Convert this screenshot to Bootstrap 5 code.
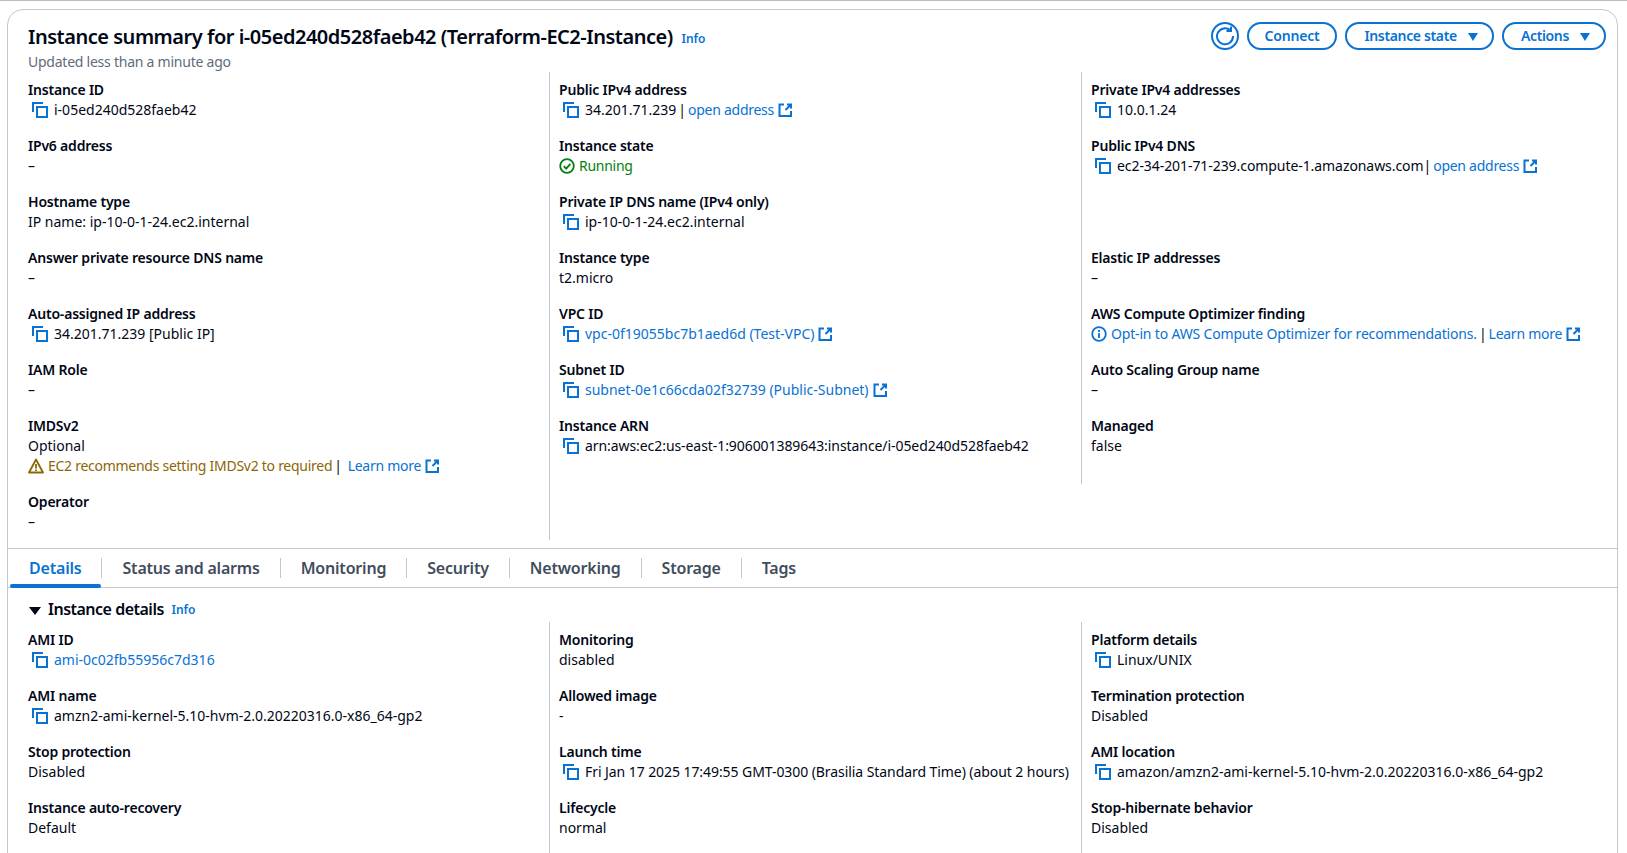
<!DOCTYPE html>
<html lang="en">

<head>
    <meta charset="UTF-8" />
    <meta name="viewport" content="width=device-width, initial-scale=1.0" />
    <title>Instance summary</title>
    <link href="https://cdn.jsdelivr.net/npm/bootstrap@5.3.0/dist/css/bootstrap.min.css" rel="stylesheet">
    <style>
        html, body { height: 853px; overflow: hidden; }
        body { background: #fff; color: #000716; font-family: "Noto Sans", sans-serif; font-size: 14px; line-height: 20px; border-top: 1px solid #b6bec9; }
        a { color: #0972d3; text-decoration: none; }
        .panel-box { margin: 8px 9px 0 7px; height: 900px; border: 1px solid #c6c6cd; border-radius: 16px 16px 0 0; }
        .summary-head { padding: 14px 11px 0 20px; height: 62px; }
        .summary-title { font-size: 20px; line-height: 26px; font-weight: 600; margin: 0; letter-spacing: -.48px; }
        .info-link { font-size: 12px; font-weight: 600; margin-left: 4px; letter-spacing: 0; vertical-align: 1px; }
        .updated { color: #5f6b7a; letter-spacing: -.24px; }
        .pill { border: 2px solid #0972d3; border-radius: 20px; color: #0972d3; font-weight: 600; font-size: 14px; line-height: 20px; height: 28px; padding: 2px 16px; background: #fff; white-space: nowrap; letter-spacing: -.2px; }
        .pill-caret { padding-left: 17px; padding-right: 14px; letter-spacing: -.35px; }
        .pill-icon { width: 28px; padding: 0; display: flex; align-items: center; justify-content: center; border-radius: 50%; }
        .head-actions { margin-top: -2px; }
        .caret-down { display: inline-block; margin-left: 11px; width: 0; height: 0; border-left: 5.500px solid transparent; border-right: 5.500px solid transparent; border-top: 8px solid #0972d3; }
        .kv-first { flex: 0 0 541px; width: 541px; padding-left: 20px; }
        .kv-col { flex: 0 0 532px; width: 532px; border-left: 1px solid #c6c6cd; padding-left: 9px; }
        .kv-last { flex: 1 1 0; width: auto; border-left: 1px solid #c6c6cd; padding-left: 9px; }
        .kv-grid { padding-bottom: 8px; }
        .kv-short { align-self: flex-start; padding-bottom: 12px; }
        .kv-item { height: 40px; margin: 8px 0 16px; white-space: nowrap; }
        .kv-item + .kv-item { margin-top: 0; }
        .kv-tall { height: 60px; }
        .kv-blank { visibility: hidden; }
        .kv-label { font-weight: 600; letter-spacing: -.2px; }
        .copy-line { display: flex; align-items: center; }
        .ico16 { width: 16px; height: 16px; flex: none; }
        .ico-copy { margin: 0 6px 0 4px; color: #0972d3; }
        .ico-ext { margin-left: 3px; color: #0972d3; vertical-align: -3px; }
        .ico-state { margin-right: 4px; }
        .pipe { margin: 0 2px; }
        .pipe-snug { margin: 0 2px 0 0; }
        .txt-tight { letter-spacing: -.27px; }
        .txt-mid { letter-spacing: -.17px; }
        .txt-slight { letter-spacing: -.07px; }
        .tone-ok { color: #037f0c; }
        .tone-warn { color: #8d6605; }
        .tab-bar { border-top: 1px solid #c6c6cd; border-bottom: 1px solid #c6c6cd; height: 40px; padding-left: 1px; }
        .tab-cell { position: relative; height: 38px; display: flex; align-items: center; font-size: 16px; font-weight: 600; color: #414d5c; letter-spacing: -.2px; }
        .tab-cell span { padding: 0 20px; border-left: 1px solid #c6c6cd; line-height: 20px; }
        .tab-cell:first-child span { border-left: 0; color: #0972d3; }
        .tab-cell:first-child::after { content: ""; position: absolute; left: 1px; right: 0; bottom: -1px; height: 4px; border-radius: 4px; background: #0972d3; }
        .details-head { padding: 8px 20px 0; height: 34px; }
        .details-head h2 { font-size: 16px; line-height: 26px; font-weight: 600; margin: 0; letter-spacing: -.5px; }
        .tri { display: inline-block; width: 0; height: 0; margin: 0 7px 0 1px; border-left: 6px solid transparent; border-right: 6px solid transparent; border-top: 8px solid #000716; }
    </style>
</head>

<body>
    <svg width="0" height="0" class="d-block position-absolute">
        <symbol id="i-copy" viewBox="0 0 16 16"><path d="M1 10V1h10M5 5h10v10H5z" fill="none" stroke="currentColor" stroke-width="2"/></symbol>
        <symbol id="i-ext" viewBox="0 0 16 16"><path d="M7 2.500H2.500V14H14V9M10 2.500h4v4M14 2.500 8.500 8" fill="none" stroke="currentColor" stroke-width="2"/></symbol>
    </svg>

    <div class="panel-box">
        <!-- Summary header -->
        <div class="summary-head d-flex justify-content-between">
            <div>
                <h1 class="summary-title">Instance summary for i-05ed240d528faeb42 (Terraform-EC2-Instance) <a href="#" class="info-link">Info</a></h1>
                <div class="updated">Updated less than a minute ago</div>
            </div>
            <div class="d-flex gap-2 head-actions">
                <button class="pill pill-icon">
                    <svg width="20" height="20" viewBox="0 0 20 20" fill="none" stroke="#0972d3" stroke-width="2"><path d="M15.500 4.500A8 8 0 1 0 18 10"/><path d="M16 0.500v4.500h-4.500"/></svg>
                </button>
                <button class="pill">Connect</button>
                <button class="pill pill-caret">Instance state<i class="caret-down"></i></button>
                <button class="pill pill-caret">Actions<i class="caret-down"></i></button>
            </div>
        </div>

        <!-- Summary values -->
        <div class="row g-0 kv-grid">
            <div class="kv-first">
                <div class="kv-item"><div class="kv-label">Instance ID</div><div class="copy-line"><svg class="ico16 ico-copy"><use href="#i-copy"/></svg>i-05ed240d528faeb42</div></div>
                <div class="kv-item"><div class="kv-label">IPv6 address</div><div>–</div></div>
                <div class="kv-item"><div class="kv-label">Hostname type</div><div>IP name: ip-10-0-1-24.ec2.internal</div></div>
                <div class="kv-item"><div class="kv-label">Answer private resource DNS name</div><div>–</div></div>
                <div class="kv-item"><div class="kv-label">Auto-assigned IP address</div><div class="copy-line"><svg class="ico16 ico-copy"><use href="#i-copy"/></svg>34.201.71.239 [Public IP]</div></div>
                <div class="kv-item"><div class="kv-label">IAM Role</div><div>–</div></div>
                <div class="kv-item kv-tall"><div class="kv-label">IMDSv2</div><div>Optional</div>
                    <div class="d-flex align-items-center">
                        <svg class="ico16 ico-state" viewBox="0 0 16 16" fill="none" stroke="#8d6605" stroke-width="1.800"><path d="M8 1.500 1 14.500h14z" stroke-linejoin="round"/><path d="M8 6v4.500M8 11.500v1.500"/></svg>
                        <span class="tone-warn txt-tight">EC2 recommends setting IMDSv2 to required</span><span class="pipe">|</span>&nbsp;<a href="#" class="txt-tight">Learn more</a><svg class="ico16 ico-ext"><use href="#i-ext"/></svg>
                    </div>
                </div>
                <div class="kv-item mb-2"><div class="kv-label">Operator</div><div>–</div></div>
            </div>
            <div class="kv-col">
                <div class="kv-item"><div class="kv-label">Public IPv4 address</div><div class="copy-line"><svg class="ico16 ico-copy"><use href="#i-copy"/></svg>34.201.71.239<span class="pipe">|</span><a href="#" class="txt-tight">open address</a><svg class="ico16 ico-ext"><use href="#i-ext"/></svg></div></div>
                <div class="kv-item"><div class="kv-label">Instance state</div>
                    <div class="d-flex align-items-center tone-ok">
                        <svg class="ico16 ico-state" viewBox="0 0 16 16" fill="none" stroke="#037f0c" stroke-width="1.800"><circle cx="8" cy="8" r="6.800"/><path d="M4.800 8.200 7.200 10.600 11.400 5.800"/></svg><span class="txt-tight">Running</span>
                    </div>
                </div>
                <div class="kv-item"><div class="kv-label">Private IP DNS name (IPv4 only)</div><div class="copy-line"><svg class="ico16 ico-copy"><use href="#i-copy"/></svg>ip-10-0-1-24.ec2.internal</div></div>
                <div class="kv-item"><div class="kv-label">Instance type</div><div>t2.micro</div></div>
                <div class="kv-item"><div class="kv-label">VPC ID</div><div class="copy-line"><svg class="ico16 ico-copy"><use href="#i-copy"/></svg><a href="#">vpc-0f19055bc7b1aed6d (Test-VPC)</a><svg class="ico16 ico-ext"><use href="#i-ext"/></svg></div></div>
                <div class="kv-item"><div class="kv-label">Subnet ID</div><div class="copy-line"><svg class="ico16 ico-copy"><use href="#i-copy"/></svg><a href="#">subnet-0e1c66cda02f32739 (Public-Subnet)</a><svg class="ico16 ico-ext"><use href="#i-ext"/></svg></div></div>
                <div class="kv-item mb-2"><div class="kv-label">Instance ARN</div><div class="copy-line"><svg class="ico16 ico-copy"><use href="#i-copy"/></svg><span class="txt-slight">arn:aws:ec2:us-east-1:906001389643:instance/i-05ed240d528faeb42</span></div></div>
            </div>
            <div class="kv-last kv-short">
                <div class="kv-item"><div class="kv-label">Private IPv4 addresses</div><div class="copy-line"><svg class="ico16 ico-copy"><use href="#i-copy"/></svg>10.0.1.24</div></div>
                <div class="kv-item"><div class="kv-label">Public IPv4 DNS</div><div class="copy-line"><svg class="ico16 ico-copy"><use href="#i-copy"/></svg><span class="txt-slight">ec2-34-201-71-239.compute-1.amazonaws.com</span><span class="pipe-snug">|</span><a href="#" class="txt-tight">open address</a><svg class="ico16 ico-ext"><use href="#i-ext"/></svg></div></div>
                <div class="kv-item kv-blank"></div>
                <div class="kv-item"><div class="kv-label">Elastic IP addresses</div><div>–</div></div>
                <div class="kv-item"><div class="kv-label">AWS Compute Optimizer finding</div>
                    <div class="d-flex align-items-center">
                        <svg class="ico16 ico-state" viewBox="0 0 16 16" fill="none" stroke="#0972d3" stroke-width="1.800"><circle cx="8" cy="8" r="6.800"/><path d="M8 7v5M8 4v2"/></svg>
                        <a href="#" class="txt-mid">Opt-in to AWS Compute Optimizer for recommendations.</a><span class="pipe">|</span><a href="#" class="txt-tight">Learn more</a><svg class="ico16 ico-ext"><use href="#i-ext"/></svg>
                    </div>
                </div>
                <div class="kv-item"><div class="kv-label">Auto Scaling Group name</div><div>–</div></div>
                <div class="kv-item"><div class="kv-label">Managed</div><div>false</div></div>
            </div>
        </div>

        <!-- Tabs -->
        <div class="tab-bar d-flex">
            <div class="tab-cell"><span>Details</span></div>
            <div class="tab-cell"><span>Status and alarms</span></div>
            <div class="tab-cell"><span>Monitoring</span></div>
            <div class="tab-cell"><span>Security</span></div>
            <div class="tab-cell"><span>Networking</span></div>
            <div class="tab-cell"><span>Storage</span></div>
            <div class="tab-cell"><span>Tags</span></div>
        </div>

        <!-- Instance details -->
        <div class="details-head">
            <h2><i class="tri"></i>Instance details <a href="#" class="info-link">Info</a></h2>
        </div>
        <div class="row g-0">
            <div class="kv-first">
                <div class="kv-item"><div class="kv-label">AMI ID</div><div class="copy-line"><svg class="ico16 ico-copy"><use href="#i-copy"/></svg><a href="#">ami-0c02fb55956c7d316</a></div></div>
                <div class="kv-item"><div class="kv-label">AMI name</div><div class="copy-line"><svg class="ico16 ico-copy"><use href="#i-copy"/></svg>amzn2-ami-kernel-5.10-hvm-2.0.20220316.0-x86_64-gp2</div></div>
                <div class="kv-item"><div class="kv-label">Stop protection</div><div>Disabled</div></div>
                <div class="kv-item"><div class="kv-label">Instance auto-recovery</div><div>Default</div></div>
            </div>
            <div class="kv-col">
                <div class="kv-item"><div class="kv-label">Monitoring</div><div>disabled</div></div>
                <div class="kv-item"><div class="kv-label">Allowed image</div><div>-</div></div>
                <div class="kv-item"><div class="kv-label">Launch time</div><div class="copy-line"><svg class="ico16 ico-copy"><use href="#i-copy"/></svg><span class="txt-slight">Fri Jan 17 2025 17:49:55 GMT-0300 (Brasilia Standard Time) (about 2 hours)</span></div></div>
                <div class="kv-item"><div class="kv-label">Lifecycle</div><div>normal</div></div>
            </div>
            <div class="kv-last">
                <div class="kv-item"><div class="kv-label">Platform details</div><div class="copy-line"><svg class="ico16 ico-copy"><use href="#i-copy"/></svg>Linux/UNIX</div></div>
                <div class="kv-item"><div class="kv-label">Termination protection</div><div>Disabled</div></div>
                <div class="kv-item"><div class="kv-label">AMI location</div><div class="copy-line"><svg class="ico16 ico-copy"><use href="#i-copy"/></svg>amazon/amzn2-ami-kernel-5.10-hvm-2.0.20220316.0-x86_64-gp2</div></div>
                <div class="kv-item"><div class="kv-label">Stop-hibernate behavior</div><div>Disabled</div></div>
            </div>
        </div>
    </div>

    <script src="https://cdn.jsdelivr.net/npm/bootstrap@5.3.0/dist/js/bootstrap.bundle.min.js"></script>
</body>

</html>
